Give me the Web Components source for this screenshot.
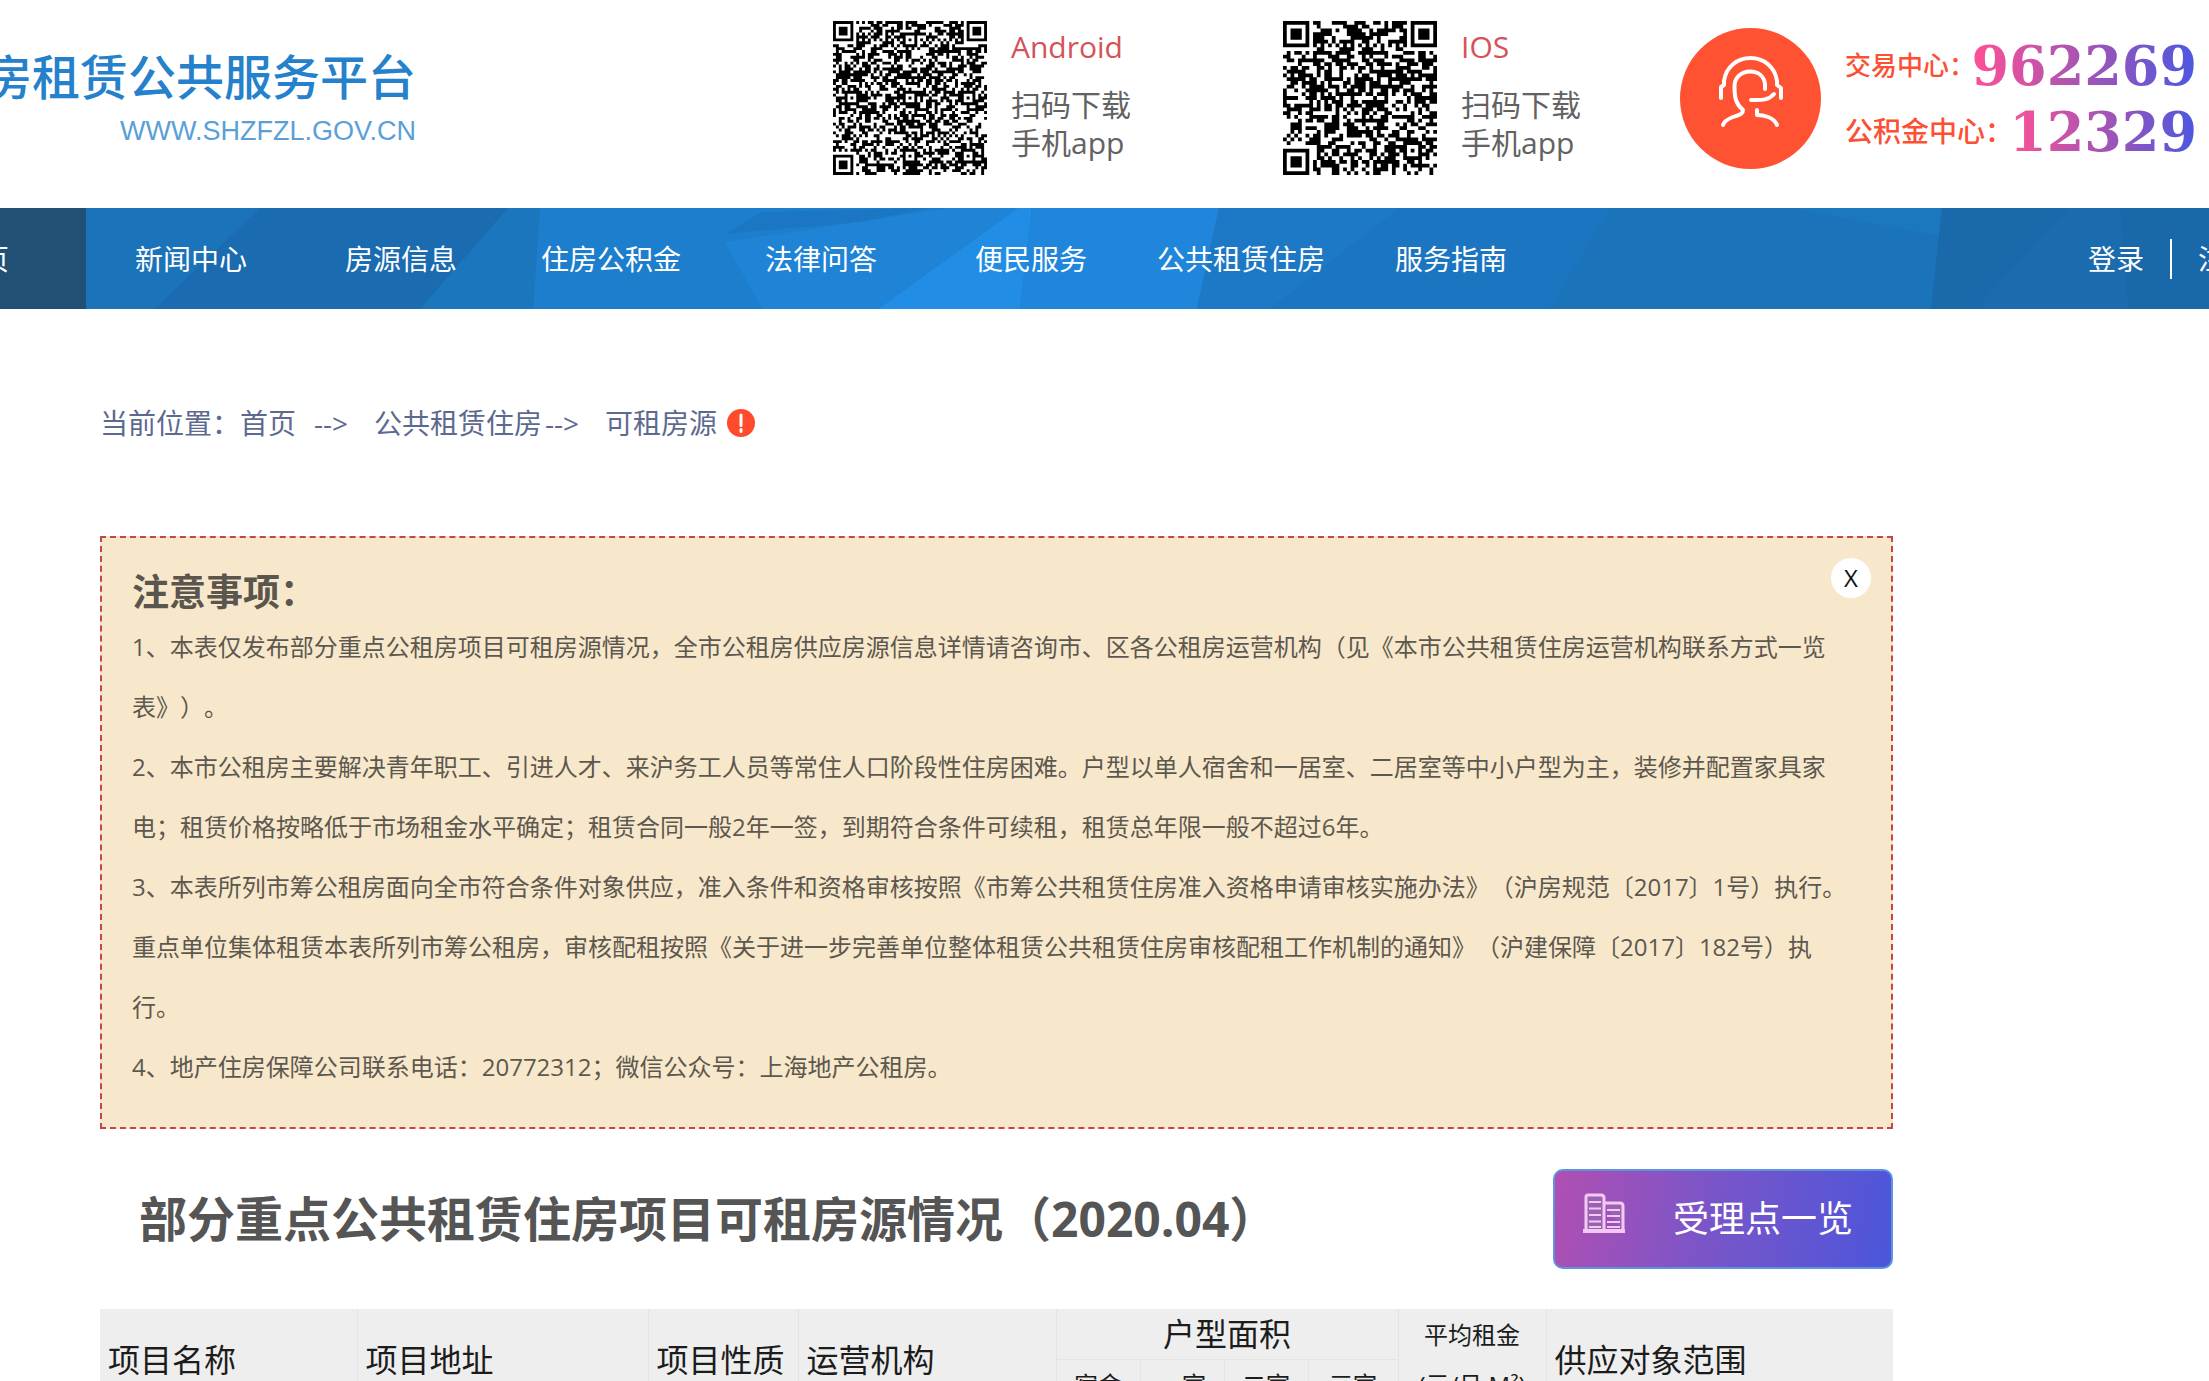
<!DOCTYPE html>
<html lang="zh-CN">
<head>
<meta charset="utf-8">
<title>房租赁公共服务平台</title>
<style>
html { scrollbar-width: none; }
body { margin: 0; overflow-x: hidden; background: #fff; color: #555; font-family: "Open Sans", "Noto Sans CJK SC", sans-serif; text-spacing-trim: space-all; }
main { display: block; margin: 0 316px 0 100px; }
</style>
</head>
<body>
<site-header>
  <qr-card modules="53" aligns="6,26,46" seed="7" name="Android">扫码下载<br>手机app</qr-card>
  <qr-card modules="41" aligns="6,34" seed="23" name="IOS">扫码下载<br>手机app</qr-card>
  <hot-line></hot-line>
</site-header>
<main-nav></main-nav>
<main>
  <bread-crumb></bread-crumb>
  <notice-box heading="注意事项：">
    <p>1、本表仅发布部分重点公租房项目可租房源情况，全市公租房供应房源信息详情请咨询市、区各公租房运营机构（见《本市公共租赁住房运营机构联系方式一览表》）。</p>
    <p>2、本市公租房主要解决青年职工、引进人才、来沪务工人员等常住人口阶段性住房困难。户型以单人宿舍和一居室、二居室等中小户型为主，装修并配置家具家电；租赁价格按略低于市场租金水平确定；租赁合同一般2年一签，到期符合条件可续租，租赁总年限一般不超过6年。</p>
    <p>3、本表所列市筹公租房面向全市符合条件对象供应，准入条件和资格审核按照《市筹公共租赁住房准入资格申请审核实施办法》（沪房规范〔2017〕1号）执行。重点单位集体租赁本表所列市筹公租房，审核配租按照《关于进一步完善单位整体租赁公共租赁住房审核配租工作机制的通知》（沪建保障〔2017〕182号）执行。</p>
    <p>4、地产住房保障公司联系电话：20772312；微信公众号：上海地产公租房。</p>
  </notice-box>
  <section-title>部分重点公共租赁住房项目可租房源情况（2020.04）</section-title>
  <house-table></house-table>
</main>
<script>
const define = (name, html, setup) => {
  const template = document.createElement('template');
  template.innerHTML = html;
  customElements.define(name, class extends HTMLElement {
    constructor() {
      super();
      this.attachShadow({ mode: 'open' }).append(template.content.cloneNode(true));
    }
    connectedCallback() { if (setup) setup(this, this.shadowRoot); }
  });
};

define('site-header', `
<style>
:host { display: grid; grid-template-columns: 833fr 450fr 397fr 529fr; height: 208px; overflow: hidden; }
.brand { width: 416px; padding-top: 42px; display: flex; flex-direction: column; align-items: flex-end; color: #2581cb; white-space: nowrap; text-decoration: none; }
strong { font-size: 48px; line-height: 70px; font-weight: 500; }
span { font: 27px/38px "Liberation Sans", sans-serif; color: #5a9fd8; }
</style>
<a class="brand" href="#"><strong>房租赁公共服务平台</strong><span>WWW.SHZFZL.GOV.CN</span></a>
<slot></slot>`);

/* Draws a square code: finder and alignment patterns, timing lines, seeded data cells. */
const codePath = (n, aligns, seed) => {
  const cell = Array.from({ length: n }, () => Array(n).fill(null));
  const ring = (cx, cy, r, on) => {
    for (let y = -r; y <= r; y++) for (let x = -r; x <= r; x++) {
      const row = cell[cy + y];
      if (row && cx + x >= 0 && cx + x < n) row[cx + x] = on(Math.max(Math.abs(x), Math.abs(y)));
    }
  };
  for (const [x, y] of [[3, 3], [n - 4, 3], [3, n - 4]]) ring(x, y, 4, d => d < 2 || d === 3);
  for (const x of aligns) for (const y of aligns) if (cell[y][x] === null) ring(x, y, 2, d => d !== 1);
  let s = seed * 2654435 + 1, d = '';
  const random = () => {
    s ^= s << 13; s ^= s >>> 17; s ^= s << 5;
    return (s >>> 0) / 4294967296;
  };
  for (let y = 0; y < n; y++) {
    let start = -1;
    for (let x = 0; x <= n; x++) {
      let on = false;
      if (x < n) {
        on = cell[y][x];
        if (on === null) on = (x === 6 || y === 6) ? (x + y) % 2 === 0 : random() < 0.53;
      }
      if (on && start < 0) start = x;
      if (!on && start >= 0) { d += 'M' + start + ' ' + y + 'H' + x + 'v1H' + start + 'z'; start = -1; }
    }
  }
  return d;
};

define('qr-card', `
<style>
:host { display: flex; gap: 24px; padding-top: 21px; font-size: 30px; line-height: 38px; white-space: nowrap; color: #626262; }
svg { width: 154px; height: 154px; flex: none; }
.label { padding-top: 7px; }
h2 { margin: 0 0 20px; font-size: 30px; line-height: 38px; font-weight: 400; color: #d5525a; }
</style>
<svg><path fill="#000"/></svg>
<div class="label"><h2></h2><slot></slot></div>`, (el, root) => {
  const n = +el.getAttribute('modules');
  root.querySelector('svg').setAttribute('viewBox', '0 0 ' + n + ' ' + n);
  root.querySelector('path').setAttribute('d', codePath(n, el.getAttribute('aligns').split(',').map(Number), +el.getAttribute('seed')));
  root.querySelector('h2').textContent = el.getAttribute('name');
});

define('hot-line', `
<style>
:host { display: flex; gap: 24px; padding-top: 28px; color: #fb5034; white-space: nowrap; }
svg { width: 141px; height: 141px; flex: none; }
dl { margin: 0; padding-top: 5px; width: 352px; flex: none; }
div { display: flex; justify-content: space-between; align-items: center; height: 66px; }
dt { width: 0; padding-bottom: 4px; font-size: 26px; font-weight: 500; }
.wide dt { font-size: 28px; }
dd { margin: 0; font: bold 54px/66px "DejaVu Serif", serif; color: transparent; background: linear-gradient(90deg, #ff5096, #a455b4 50%, #4b57e2); -webkit-background-clip: text; background-clip: text; }
</style>
<svg viewBox="0 0 141 141" fill="none" stroke="#fff" stroke-width="4" stroke-linecap="round" stroke-linejoin="round">
<circle cx="70.5" cy="70.5" r="70.5" fill="#ff5233" stroke="none"/>
<path d="M41 70V59l3-2v-4C46 39 57 30 70.500 30S95 39 97 53v4l4 3v10"/>
<path d="M85 61v-5c-1-8-7-12.500-15-12.500-9 0-15.500 6-15.500 15C54.500 70 56 76 63 82c0 5-5 5-10 7-5 2-9 4-10 8"/>
<path d="M71 72c9 0 17 1 23-6M77 82v5c6 0 17 2 20 10"/>
</svg>
<dl><div><dt>交易中心：</dt><dd>962269</dd></div><div class="wide"><dt>公积金中心：</dt><dd>12329</dd></div></dl>`);

define('main-nav', `
<style>
:host { display: block; position: relative; height: 101px; overflow: hidden; background: #1b73b9; }
svg { position: absolute; inset: 0; width: 100%; height: 100%; }
nav { position: relative; display: flex; height: 101px; align-items: center; margin: 0 -45px 0 -124px; font-size: 28px; line-height: 104px; white-space: nowrap; }
a { color: #fff; text-decoration: none; }
.item { width: 210px; flex: none; text-align: center; }
.home { background: #224f74; }
.user { display: flex; align-items: center; gap: 26px; margin-left: auto; }
i { width: 2px; height: 40px; background: #fff; }
</style>
<svg viewBox="0 0 2209 101" preserveAspectRatio="none" aria-hidden="true">
<path fill="#1a6bb0" d="M260 0H508L420 101H155z"/>
<path fill="#1b76bd" d="M508 0H540L533 101H420z"/>
<path fill="#1c7ecd" d="M540 0H1018L878 101H533z"/>
<path fill="#1b77c4" d="M725 26L762 4 930 0 860 14z"/>
<path fill="#1f83d6" d="M725 34L950 0H1018L878 101H762z"/>
<path fill="#228de5" d="M1018 0H1032L1020 101H878z"/>
<path fill="#2086db" d="M1032 0H1219L1197 101H1020z"/>
<path fill="#1d79c6" d="M1219 0H1400L1270 101H1197z"/>
<path fill="#1b75c0" d="M1400 0H1610L1550 101H1270z"/>
<path fill="#1b77be" d="M1790 0H1942L1939 28z"/>
<path fill="#1969ab" d="M1942 0H2070L1975 101H1931z"/>
<path fill="#1a6caf" d="M2070 0H2120L2128 101H1975z"/>
<path fill="#1968a9" d="M2120 0H2209V101H2128z"/>
</svg>
<nav><a class="item home" href="#">首页</a><a class="item" href="#">新闻中心</a><a class="item" href="#">房源信息</a><a class="item" href="#">住房公积金</a><a class="item" href="#">法律问答</a><a class="item" href="#">便民服务</a><a class="item" href="#">公共租赁住房</a><a class="item" href="#">服务指南</a>
<div class="user"><a href="#">登录</a><i></i><a href="#">注册</a></div></nav>`);

define('bread-crumb', `
<style>
:host { display: flex; align-items: center; padding: 94px 0 93px; font-size: 28px; line-height: 40px; color: #5d6a90; white-space: nowrap; }
a { color: inherit; text-decoration: none; }
.arrow { width: 44px; margin-left: 3px; margin-right: 16px; }
.first { margin-left: 18px; }
svg { width: 28px; height: 28px; margin-left: 10px; }
</style>
<span>当前位置：</span><a href="#">首页</a><span class="arrow first">--&gt;</span><a href="#">公共租赁住房</a><span class="arrow">--&gt;</span><a href="#">可租房源</a>
<svg viewBox="0 0 28 28"><circle cx="14" cy="14" r="14" fill="#ff4b2b"/><path d="M14 6v10.500M14 20.500v2" stroke="#fff" stroke-width="3" stroke-linecap="round"/></svg>`);

define('notice-box', `
<style>
:host { display: block; position: relative; padding: 29px 42px 30px 30px; border: 2px dashed #c5454c; background: #f8e8cb; font-size: 24px; line-height: 60px; color: #5d584f; }
h2 { margin: 0; font-size: 37px; line-height: 50px; font-weight: 700; color: #5a554d; }
button { position: absolute; top: 20px; right: 20px; width: 40px; height: 40px; padding: 0; border: 0; border-radius: 50%; background: #fff; color: #111; font: 24px/40px "Open Sans", sans-serif; }
::slotted(p) { margin: 0; }
</style>
<h2></h2><slot></slot><button type="button" aria-label="关闭">X</button>`, (el, root) => {
  root.querySelector('h2').textContent = el.getAttribute('heading');
});

define('section-title', `
<style>
:host { display: flex; justify-content: space-between; align-items: center; margin: 40px 0; padding-left: 39px; }
h1 { margin: 0; font-size: 48px; line-height: 70px; font-weight: 700; color: #555; white-space: nowrap; }
button { box-sizing: border-box; width: 340px; height: 100px; padding: 0 38px 0 28px; display: flex; align-items: center; justify-content: space-between; border: 2px solid #5e93e2; border-radius: 10px; background: linear-gradient(100deg, #b04fb2, #7b55c8 45%, #4b56da); color: #fff; font: inherit; font-size: 36px; line-height: 50px; }
svg { width: 42px; height: 40px; margin-bottom: 12px; }
</style>
<h1><slot></slot></h1>
<button type="button"><svg viewBox="0 0 42 40" fill="none" stroke="#f3c9f3" stroke-width="3">
<path d="M3 38V4q0-2 2-2h13q3 0 3 3v33M21 10h16q3 0 3 3v25" fill="#9a62b2"/>
<path d="M0 38h42" stroke-width="4"/>
<path d="M6 9h12M6 15.500h12M6 22h12M6 28.500h12M6 34h12M24 17h13M24 23h13M24 29h13M24 34h13" stroke-width="2"/>
</svg>受理点一览</button>`);

define('house-table', `
<style>
:host { display: block; }
table { width: 100%; table-layout: fixed; border-collapse: collapse; background: #eee; color: #1c1c1c; }
th { box-sizing: border-box; height: 50px; padding: 0 0 0 8px; border: 1px solid #e4e4e4; border-width: 0 0 1px 1px; font-size: 32px; line-height: 50px; font-weight: 400; text-align: left; white-space: nowrap; }
th:first-child { border-left: 0; }
.mid { padding: 0; text-align: center; }
.small { padding: 0; font-size: 24px; text-align: center; }
tr + tr th:first-child { border-left: 1px solid #e4e4e4; }
</style>
<table>
<colgroup><col style="width:257px"><col style="width:291px"><col style="width:150px"><col style="width:258px"><col style="width:84px"><col style="width:84px"><col style="width:84px"><col style="width:90px"><col style="width:148px"><col></colgroup>
<thead>
<tr><th rowspan="2">项目名称</th><th rowspan="2">项目地址</th><th rowspan="2">项目性质</th><th rowspan="2">运营机构</th><th class="mid" colspan="4">户型面积</th><th class="small" rowspan="2">平均租金<br>(元/月·M²)</th><th rowspan="2">供应对象范围</th></tr>
<tr><th class="small">宿舍</th><th class="small">一室</th><th class="small">二室</th><th class="small">三室</th></tr>
</thead>
</table>`);
</script>
</body>
</html>
